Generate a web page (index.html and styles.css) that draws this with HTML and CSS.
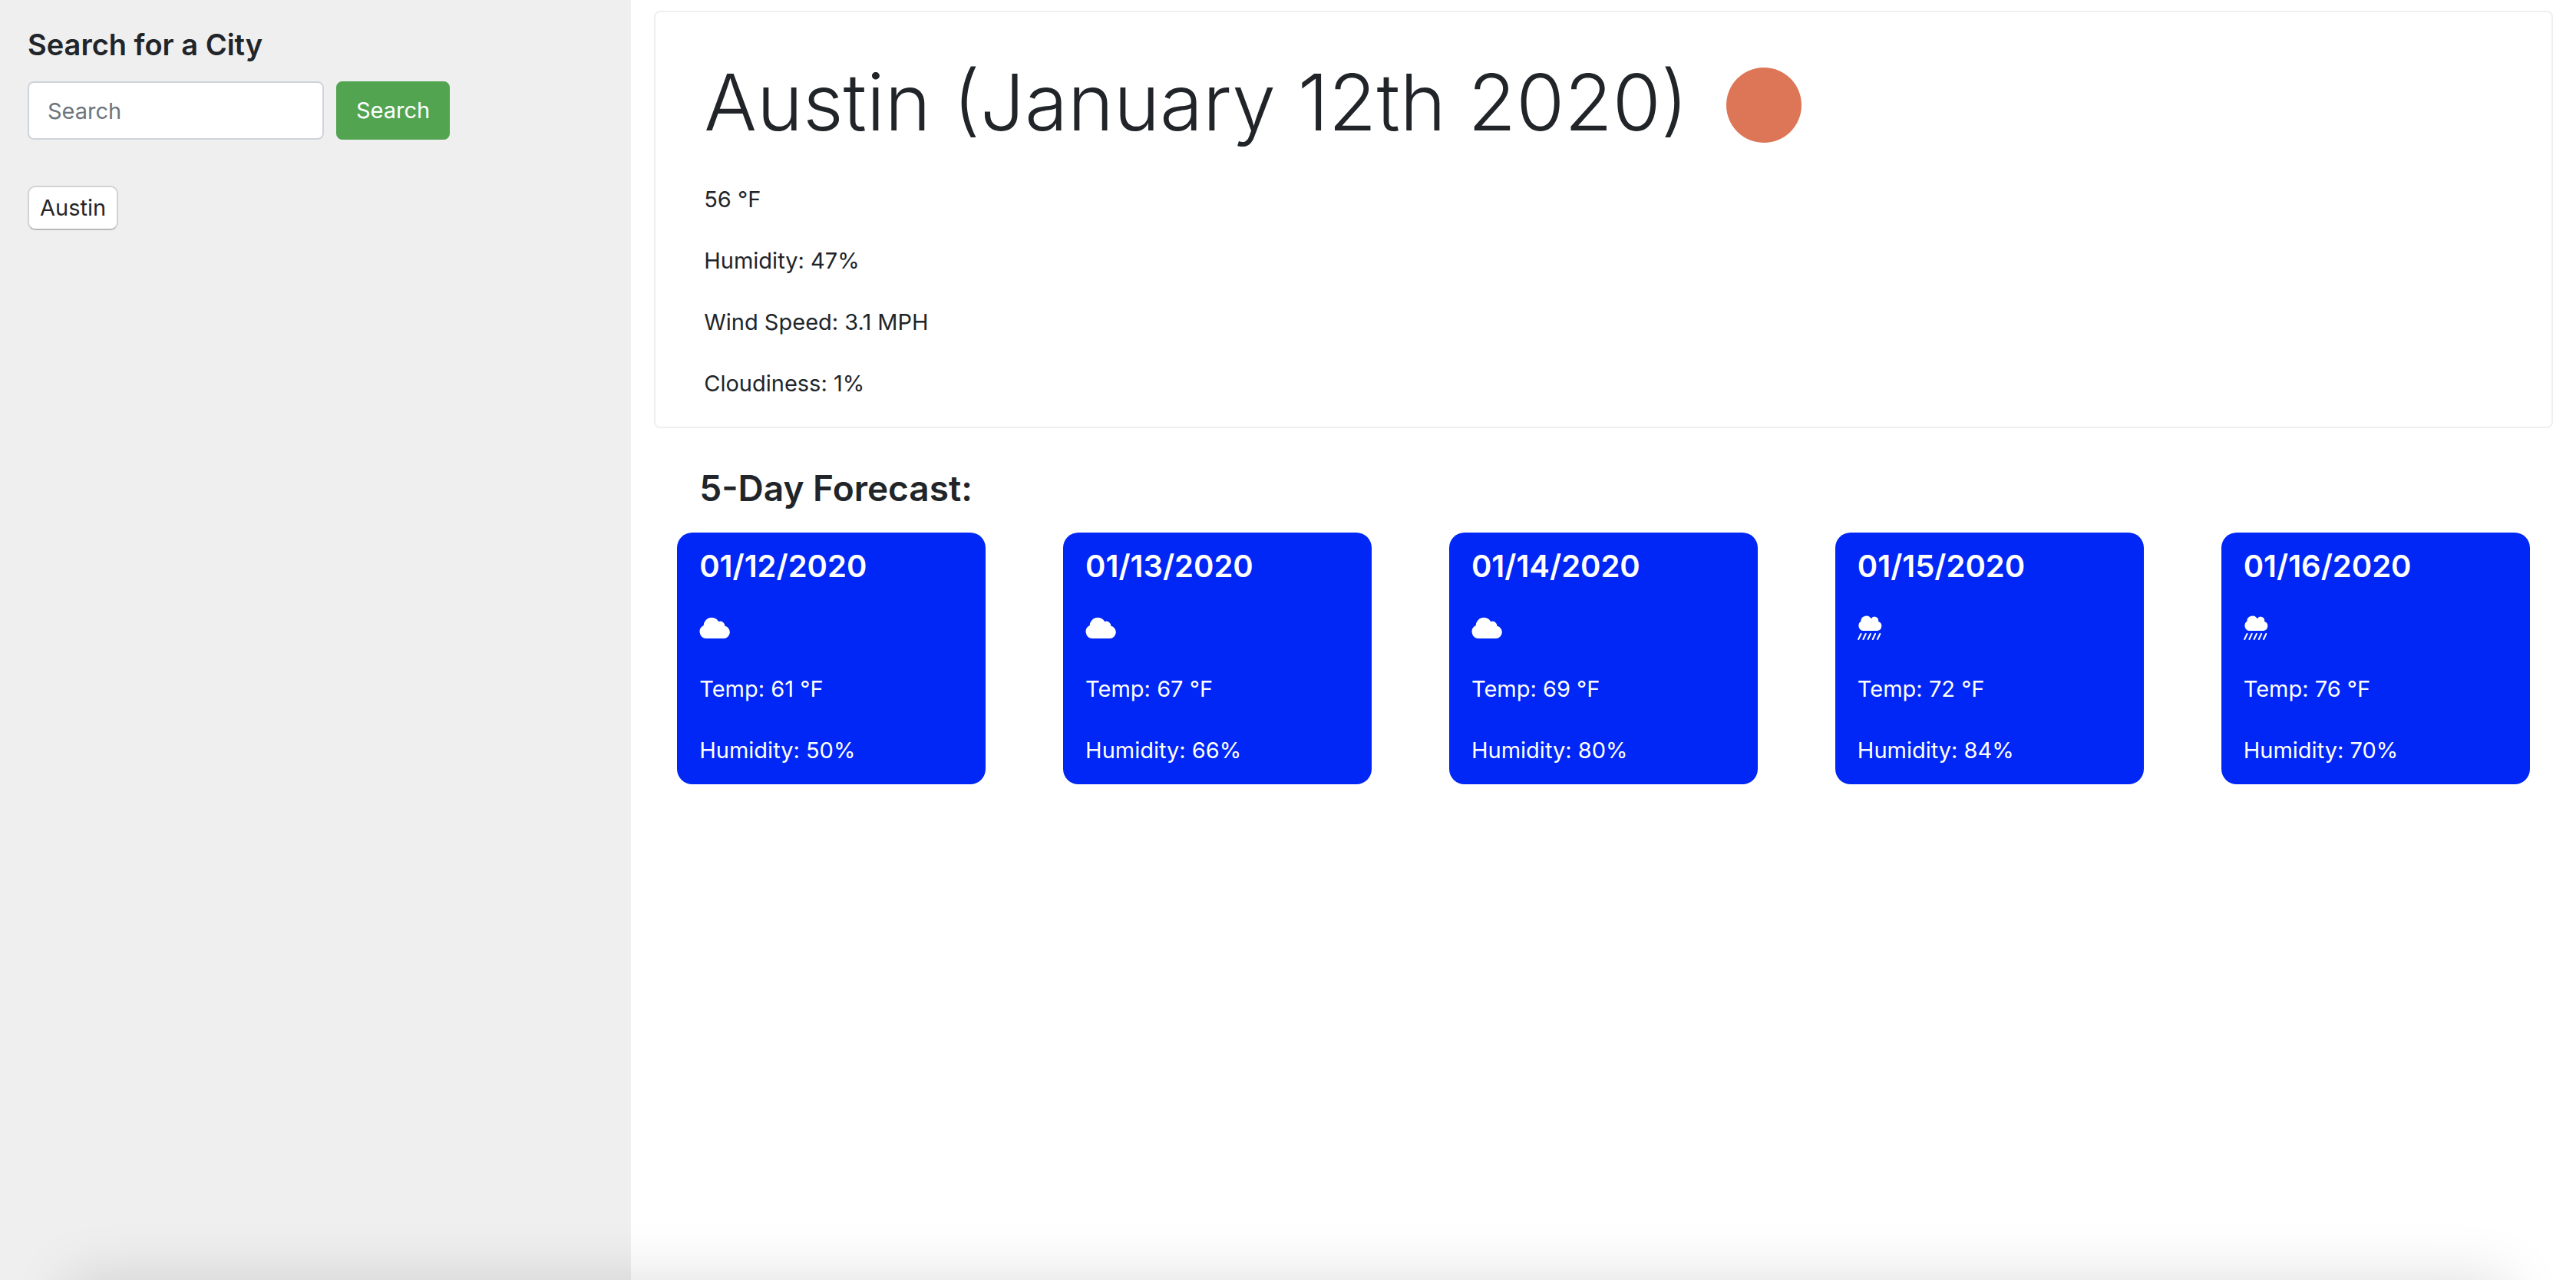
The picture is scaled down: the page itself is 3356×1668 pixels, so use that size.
FILE: index.html
```html
<!DOCTYPE html>
<html lang="en">
<head>
<meta charset="utf-8">
<title>Weather Dashboard</title>
<link rel="stylesheet" href="styles.css">
</head>
<body>
<svg class="sprite" aria-hidden="true">
  <symbol id="cloud" viewBox="0 0 40 28">
    <path d="M9 28a9 9 0 0 1-3.300-17.100A10.500 10.500 0 0 1 25.200 5.900A6.200 6.200 0 0 1 33.400 11.800A8.200 8.200 0 0 1 32 28z"/>
  </symbol>
  <symbol id="rain" viewBox="0 0 33 32">
    <path d="M7 20a7 7 0 0 1-2.700-12.500A7.200 7.200 0 0 1 17.800 4.200A5 5 0 0 1 27 7.800A6.300 6.300 0 0 1 26 20z"/>
    <path d="M4.500 24l-3.300 7M10.700 24l-3.300 7M16.900 24l-3.300 7M23.100 24l-3.300 7M29.300 24l-3.300 7" fill="none" stroke="currentColor" stroke-width="2" stroke-linecap="round"/>
  </symbol>
</svg>
<div class="layout">
  <aside class="sidebar">
    <form class="search">
      <label class="search-label" for="city">Search for a City</label>
      <div class="search-row">
        <input class="search-input" id="city" type="search" placeholder="Search">
        <button class="search-button" type="button">Search</button>
      </div>
    </form>
    <button class="city-button" type="button">Austin</button>
  </aside>
  <main class="main">
    <section class="current">
      <div class="current-head">
        <h1 class="current-title">Austin (January 12th 2020)</h1>
        <span class="sun" role="img" aria-label="Clear"></span>
      </div>
      <p class="line">56 °F</p>
      <p class="line">Humidity: 47%</p>
      <p class="line">Wind Speed: 3.1 MPH</p>
      <p class="line">Cloudiness: 1%</p>
    </section>
    <section class="forecast">
      <h2 class="forecast-title">5-Day Forecast:</h2>
      <div class="days">
        <article class="day">
          <h3 class="day-date">01/12/2020</h3>
          <div class="day-icon"><svg class="cloud"><use href="#cloud"/></svg></div>
          <p class="line">Temp: 61 °F</p>
          <p class="line">Humidity: 50%</p>
        </article>
        <article class="day">
          <h3 class="day-date">01/13/2020</h3>
          <div class="day-icon"><svg class="cloud"><use href="#cloud"/></svg></div>
          <p class="line">Temp: 67 °F</p>
          <p class="line">Humidity: 66%</p>
        </article>
        <article class="day">
          <h3 class="day-date">01/14/2020</h3>
          <div class="day-icon"><svg class="cloud"><use href="#cloud"/></svg></div>
          <p class="line">Temp: 69 °F</p>
          <p class="line">Humidity: 80%</p>
        </article>
        <article class="day">
          <h3 class="day-date">01/15/2020</h3>
          <div class="day-icon"><svg class="rain"><use href="#rain"/></svg></div>
          <p class="line">Temp: 72 °F</p>
          <p class="line">Humidity: 84%</p>
        </article>
        <article class="day">
          <h3 class="day-date">01/16/2020</h3>
          <div class="day-icon"><svg class="rain"><use href="#rain"/></svg></div>
          <p class="line">Temp: 76 °F</p>
          <p class="line">Humidity: 70%</p>
        </article>
      </div>
    </section>
  </main>
</div>
<div class="bottom-shade"></div>
</body>
</html>
```
FILE: styles.css
```css
* {
  box-sizing: border-box;
}

body {
  margin: 0;
  background: #fff;
  color: #212529;
  font-family: Inter, "Liberation Sans", sans-serif;
  font-size: 29px;
  line-height: 48px;
}

h1, h2, h3, p {
  margin: 0;
}

button, input {
  font: inherit;
}

.sprite {
  display: none;
}

.layout {
  display: flex;
  min-height: 100vh;
}

.sidebar {
  flex: none;
  width: 24.5%;
  padding: 34px 36px;
  background: #efefef;
}

.search {
  margin-bottom: 60px;
}

.search-label {
  display: block;
  margin-bottom: 24px;
  font-size: 38px;
  font-weight: 600;
}

.search-row {
  display: flex;
  gap: 16px;
}

.search-input {
  width: 386px;
  height: 76px;
  padding: 12px 24px;
  border: 2px solid #ced4da;
  border-radius: 8px;
  background: #fff;
  color: #495057;
  appearance: none;
}

.search-input::placeholder {
  color: #6c757d;
  opacity: 1;
}

.search-button {
  height: 76px;
  padding: 12px 24px;
  border: 2px solid #53a451;
  border-radius: 8px;
  background: #53a451;
  color: #fff;
}

.city-button {
  display: block;
  height: 58px;
  padding: 3px 14px;
  border: 2px solid #d2d2d2;
  border-bottom-color: #b8b8b8;
  border-radius: 10px;
  background: #fff;
  color: #262626;
}

.main {
  flex: 1;
  min-width: 0;
  padding: 14px 30px;
}

.current {
  padding: 46px 63px 32px;
  border: 2px solid #efefef;
  border-radius: 8px;
}

.current-head {
  display: flex;
  align-items: center;
  gap: 50px;
  margin-bottom: 32px;
}

.current-title {
  font-size: 102px;
  font-weight: 300;
  line-height: 142px;
}

.sun {
  flex: none;
  width: 98px;
  height: 98px;
  margin-top: 8px;
  border-radius: 50%;
  background: #dd7656;
}

.line + .line {
  margin-top: 32px;
}

.forecast {
  padding: 48px 30px;
}

.forecast-title {
  padding: 0 29px;
  margin-bottom: 28px;
  font-size: 46px;
  font-weight: 600;
  line-height: 60px;
}

.days {
  display: flex;
  justify-content: space-between;
}

.day {
  width: 16.666%;
  padding: 20px 29px;
  border-radius: 20px;
  background: #0027f5;
  color: #fff;
}

.day-date {
  margin-bottom: 32px;
  font-size: 40px;
  font-weight: 600;
}

.day-icon {
  display: flex;
  align-items: center;
  height: 48px;
  margin-bottom: 32px;
}

.day-icon svg {
  fill: currentColor;
}

.cloud {
  width: 40px;
  height: 28px;
}

.rain {
  width: 33px;
  height: 32px;
}

/* soft shade along the lower edge of the window */
.bottom-shade {
  position: fixed;
  top: 100%;
  left: 90px;
  right: 90px;
  height: 200px;
  box-shadow: 0 0 80px rgba(0, 0, 0, 0.14);
  pointer-events: none;
}
```
